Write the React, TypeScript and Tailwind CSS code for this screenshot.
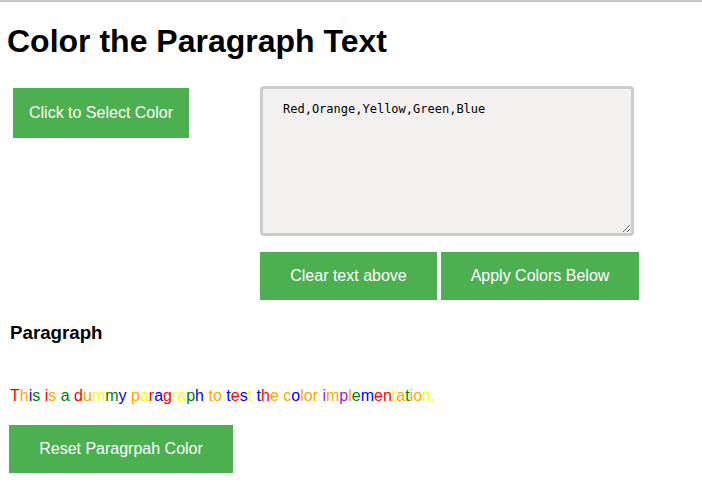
import { useState } from "react";

const PARA = "This is a dummy paragraph to test the color implementation.";

// colour picked per non-space letter, as it appears in the screenshot
const LETTER_COLORS = [
  "red", "orange", "blue", "green",
  "red", "orange",
  "green",
  "red", "orange", "yellow", "green", "blue",
  "orange", "yellow", "red", "blue", "red", "yellow", "yellow", "green", "blue",
  "orange", "orange",
  "blue", "red", "blue", "yellow",
  "blue", "red", "orange",
  "orange", "blue", "orange", "orange", "orange",
  "#8a2be2", "orange", "#8a2be2", "orange", "green", "blue", "red", "red", "yellow", "orange", "green", "orange", "orange", "yellow", "yellow",
];

const App = () => {
  const [text, setText] = useState("Red,Orange,Yellow,Green,Blue");
  const [colored, setColored] = useState(true);

  let n = 0;
  const letters = PARA.split("").map((ch, i) => {
    if (ch === " ") return <span key={i}> </span>;
    const color = LETTER_COLORS[n++] ?? "black";
    return (
      <span key={i} style={{ color: colored ? color : undefined }}>
        {ch}
      </span>
    );
  });

  return (
    <div className="min-h-[502px] bg-white border-t-2 border-[#c8c8c8] font-['Liberation_Sans',Arial,sans-serif] text-black">
      <div className="px-[8px] pt-[21px]">
        <h1 className="-ml-[1px] text-[32px] font-bold leading-[37px]">Color the Paragraph Text</h1>

        <div className="mt-[26px] flex">
          <div className="w-[252px] pl-[5px] pt-[2px]">
            <button className="w-[176px] h-[50px] bg-[#4caf50] text-white text-[16px]">
              Click to Select Color
            </button>
          </div>
          <div className="flex flex-col">
            <textarea
              value={text}
              onChange={(e) => setText(e.target.value)}
              className="w-[374px] h-[150px] border-[3px] border-[#cccccc] rounded-[4px] bg-[#f2f1f0] px-[20px] py-[12px] font-['DejaVu_Sans_Mono',monospace] text-[12px] leading-[16px] text-black resize outline-none"
            />
            <div className="mt-[16px] flex gap-[4px]">
              <button
                onClick={() => setText("")}
                className="w-[177px] h-[48px] bg-[#4caf50] text-white text-[16px]"
              >
                Clear text above
              </button>
              <button
                onClick={() => setColored(true)}
                className="w-[198px] h-[48px] bg-[#4caf50] text-white text-[16px]"
              >
                Apply Colors Below
              </button>
            </div>
          </div>
        </div>

        <div className="pl-[2px]">
          <h3 className="mt-[22px] text-[18.72px] font-bold leading-[22px]">Paragraph</h3>
          <p className="mt-[43px] text-[16px] leading-[18px]">{letters}</p>
          <button
            onClick={() => setColored(false)}
            className="mt-[20px] -ml-[1px] w-[224px] h-[48px] bg-[#4caf50] text-white text-[16px]"
          >
            Reset Paragrpah Color
          </button>
        </div>
      </div>
    </div>
  );
};

export default App;
